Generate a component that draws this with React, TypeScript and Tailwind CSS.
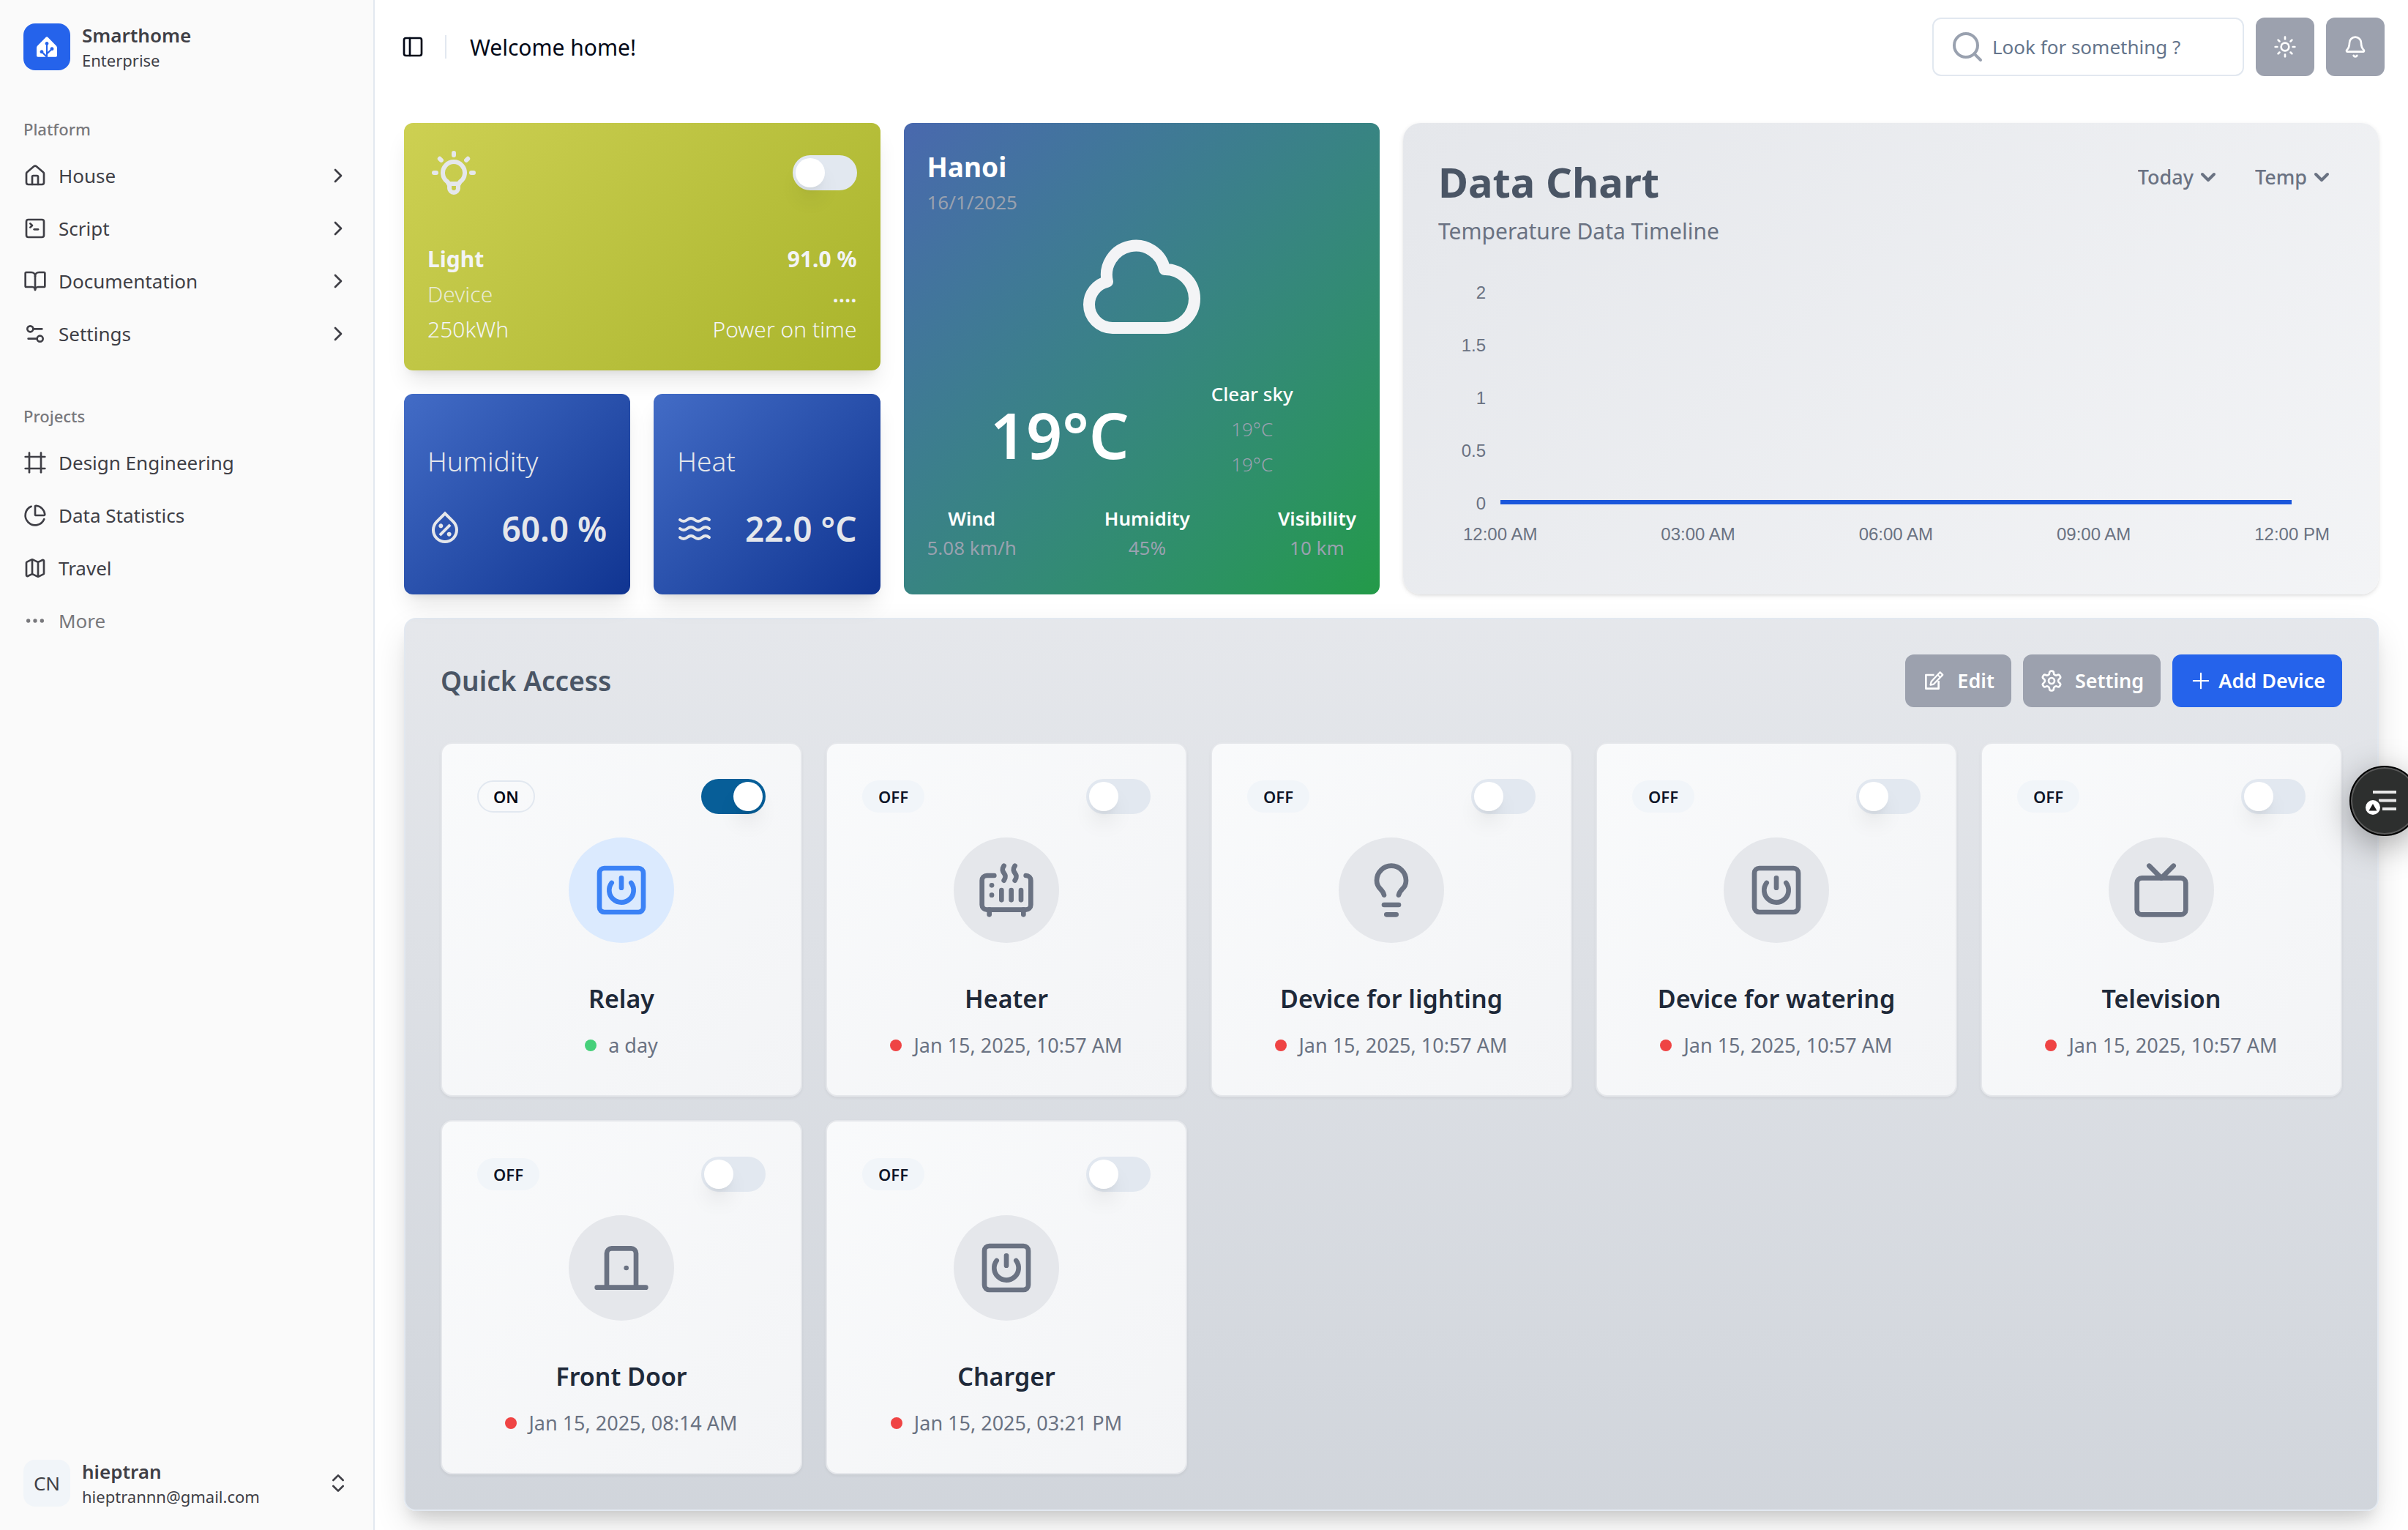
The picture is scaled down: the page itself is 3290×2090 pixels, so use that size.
import React from "react";
import {
  Bell, BookOpen, ChartPie, ChevronDown, ChevronRight, ChevronsUpDown, Ellipsis, Frame, Heater, House,
  Lightbulb, Map, PanelLeft, Search, Settings2, SquarePower, SquareTerminal, Sun, Tv, Waves,
} from "lucide-react";
import { RiWaterPercentLine } from "react-icons/ri";
import { RxPlus } from "react-icons/rx";
import { SiHomeassistant } from "react-icons/si";
import { TbBulb } from "react-icons/tb";

type IconProps = { className?: string };
type IconType = React.ComponentType<IconProps>;

const strokeProps = {
  viewBox: "0 0 24 24",
  fill: "none",
  stroke: "currentColor",
  strokeWidth: 2,
  strokeLinecap: "round" as const,
  strokeLinejoin: "round" as const,
};

function DoorIcon({ className }: IconProps) {
  return (
    <svg {...strokeProps} className={className} aria-hidden="true">
      <path d="M18 20V6a2 2 0 0 0-2-2H8a2 2 0 0 0-2 2v14" />
      <path d="M2 20h20" />
      <path d="M14 12v.01" />
    </svg>
  );
}

function EditIcon({ className }: IconProps) {
  return (
    <svg {...strokeProps} strokeLinecap="butt" className={className} aria-hidden="true">
      <path d="M12.500 6H4v14h13v-8" />
      <path strokeWidth="1.700" d="M18.500 3.200l2.700 2.700-9.200 9.500-3.300.8.800-3.400z" />
      <path strokeWidth="1.500" d="M16 5.800l2.700 2.700" />
    </svg>
  );
}

function CogIcon({ className }: IconProps) {
  return (
    <svg {...strokeProps} className={className} aria-hidden="true">
      <path d="M12.22 2h-.44a2 2 0 0 0-2 2v.18a2 2 0 0 1-1 1.73l-.43.25a2 2 0 0 1-2 0l-.15-.08a2 2 0 0 0-2.73.73l-.22.38a2 2 0 0 0 .73 2.73l.15.1a2 2 0 0 1 1 1.72v.51a2 2 0 0 1-1 1.74l-.15.09a2 2 0 0 0-.73 2.73l.22.38a2 2 0 0 0 2.73.73l.15-.08a2 2 0 0 1 2 0l.43.25a2 2 0 0 1 1 1.73V20a2 2 0 0 0 2 2h.44a2 2 0 0 0 2-2v-.18a2 2 0 0 1 1-1.73l.43-.25a2 2 0 0 1 2 0l.15.08a2 2 0 0 0 2.73-.73l.22-.39a2 2 0 0 0-.73-2.73l-.15-.08a2 2 0 0 1-1-1.74v-.5a2 2 0 0 1 1-1.74l.15-.09a2 2 0 0 0 .73-2.73l-.22-.38a2 2 0 0 0-2.73-.73l-.15.08a2 2 0 0 1-2 0l-.43-.25a2 2 0 0 1-1-1.73V4a2 2 0 0 0-2-2z" />
      <circle cx="12" cy="12" r="3" />
    </svg>
  );
}

function CloudIcon({ className }: IconProps) {
  return (
    <svg {...strokeProps} className={className} aria-hidden="true">
      <path d="M3 15a4 4 0 004 4h9a5 5 0 10-.1-9.999 5.002 5.002 0 10-9.78 2.096A4.001 4.001 0 003 15z" />
    </svg>
  );
}

const platform: { label: string; Icon: IconType }[] = [
  { label: "House", Icon: House },
  { label: "Script", Icon: SquareTerminal },
  { label: "Documentation", Icon: BookOpen },
  { label: "Settings", Icon: Settings2 },
];

const projects: { label: string; Icon: IconType }[] = [
  { label: "Design Engineering", Icon: Frame },
  { label: "Data Statistics", Icon: ChartPie },
  { label: "Travel", Icon: Map },
];

const devices: { name: string; on: boolean; since: string; Icon: IconType }[] = [
  { name: "Relay", on: true, since: "a day", Icon: SquarePower },
  { name: "Heater", on: false, since: "Jan 15, 2025, 10:57 AM", Icon: Heater },
  { name: "Device for lighting", on: false, since: "Jan 15, 2025, 10:57 AM", Icon: Lightbulb },
  { name: "Device for watering", on: false, since: "Jan 15, 2025, 10:57 AM", Icon: SquarePower },
  { name: "Television", on: false, since: "Jan 15, 2025, 10:57 AM", Icon: Tv },
  { name: "Front Door", on: false, since: "Jan 15, 2025, 08:14 AM", Icon: DoorIcon },
  { name: "Charger", on: false, since: "Jan 15, 2025, 03:21 PM", Icon: SquarePower },
];

function Switch({ label, on = false }: { label: string; on?: boolean }) {
  return (
    <input
      type="checkbox"
      role="switch"
      aria-label={label}
      defaultChecked={on}
      className="block h-12 w-[88px] shrink-0 cursor-pointer appearance-none rounded-full bg-[#e2e8f0] p-1 before:block before:size-10 before:rounded-full before:bg-white before:shadow-[0_20px_30px_-6px_rgba(0,0,0,0.1),0_8px_12px_-8px_rgba(0,0,0,0.1)] checked:bg-[#075e98] checked:before:translate-x-10"
    />
  );
}

function Sidebar() {
  return (
    <aside className="flex w-[512px] shrink-0 flex-col border-r-2 border-[#e2e8f0] bg-[#fafafa] text-[26px] text-[#3f3f46]">
      <div className="flex items-center gap-4 px-8 pt-[30px] pb-[30px]">
        <div className="flex size-16 items-center justify-center rounded-2xl bg-[#2563eb] text-white">
          <SiHomeassistant className="size-7" />
        </div>
        <div>
          <p className="leading-9 font-semibold">Smarthome</p>
          <p className="text-[22px] leading-8">Enterprise</p>
        </div>
      </div>
      <nav aria-label="Platform" className="px-4 pt-4">
        <h2 className="px-4 text-[22px] leading-[64px] font-medium text-[#78787c]">Platform</h2>
        <ul className="flex flex-col gap-2">
          {platform.map(({ label, Icon }) => (
            <li key={label}>
              <button type="button" className="flex h-16 w-full items-center gap-4 px-4">
                <Icon className="size-8" />
                {label}
                <ChevronRight className="ml-auto size-8" />
              </button>
            </li>
          ))}
        </ul>
      </nav>
      <nav aria-label="Projects" className="px-4 pt-12">
        <h2 className="px-4 text-[22px] leading-[64px] font-medium text-[#78787c]">Projects</h2>
        <ul className="flex flex-col gap-2">
          {projects.map(({ label, Icon }) => (
            <li key={label}>
              <a href="#" className="flex h-16 items-center gap-4 px-4">
                <Icon className="size-8" />
                {label}
              </a>
            </li>
          ))}
          <li>
            <button type="button" className="flex h-16 w-full items-center gap-4 px-4 text-[#78787c]">
              <Ellipsis className="size-8" />
              More
            </button>
          </li>
        </ul>
      </nav>
      <button type="button" className="mt-auto flex items-center gap-4 px-8 pb-[30px] text-left">
        <span className="flex size-16 items-center justify-center rounded-2xl bg-[#f1f5f9]">CN</span>
        <span className="flex flex-col">
          <span className="leading-9 font-semibold">hieptran</span>
          <span className="text-[22px] leading-8">hieptrannn@gmail.com</span>
        </span>
        <ChevronsUpDown className="ml-auto size-8" />
      </button>
    </aside>
  );
}

function Header() {
  return (
    <header className="flex h-32 items-center px-8">
      <button type="button" aria-label="Toggle sidebar" className="-ml-2 flex size-14 items-center justify-center">
        <PanelLeft className="size-8" />
      </button>
      <div className="ml-4 h-8 w-0.5 bg-[#e2e8f0]" />
      <h1 className="ml-8 text-[30px]">Welcome home!</h1>
      <div className="ml-auto flex items-center gap-4">
        <label className="flex h-20 w-[426px] items-center gap-2.5 rounded-xl border-2 border-[#e2e8f0] px-[22px]">
          <Search className="size-12 shrink-0 text-gray-400" />
          <input
            type="search"
            aria-label="Search"
            placeholder="Look for something ?"
            className="min-w-0 flex-1 bg-transparent text-[26px] outline-none placeholder:text-[#64748b] placeholder:opacity-100"
          />
        </label>
        <button type="button" aria-label="Toggle theme" className="flex size-20 items-center justify-center rounded-xl bg-[#9ca1ae] text-white">
          <Sun className="size-8" />
        </button>
        <button type="button" aria-label="Notifications" className="flex size-20 items-center justify-center rounded-xl bg-[#9ca1ae] text-white">
          <Bell className="size-8" />
        </button>
      </div>
    </header>
  );
}

function LightCard() {
  return (
    <section className="rounded-xl bg-linear-135 from-[#cdd052] to-[#a9b42a] p-8 text-[30px] leading-[48px] text-gray-100 shadow-[0_20px_30px_-6px_rgba(0,0,0,0.1),0_8px_12px_-8px_rgba(0,0,0,0.1)]">
      <div className="flex items-center justify-between">
        <TbBulb className="size-[72px] text-gray-200" />
        <Switch label="Light" />
      </div>
      <div className="mt-[58px] flex justify-between font-bold">
        <span>Light</span>
        <span>91.0 %</span>
      </div>
      <div className="flex justify-between">
        <span className="font-light opacity-80">Device</span>
        <span className="font-semibold">....</span>
      </div>
      <div className="flex justify-between font-light">
        <span>250kWh</span>
        <span>Power on time</span>
      </div>
    </section>
  );
}

function MetricCard({ title, value, Icon }: { title: string; value: string; Icon: IconType }) {
  return (
    <section className="h-[274px] rounded-xl bg-linear-135 from-[#436cc6] to-[#103491] px-8 pt-16 text-gray-200 shadow-[0_20px_30px_-6px_rgba(0,0,0,0.1),0_8px_12px_-8px_rgba(0,0,0,0.1)]">
      <h2 className="text-[37px] leading-[56px] font-light">{title}</h2>
      <div className="mt-8 flex items-center justify-between">
        <Icon className="size-12" />
        <span className="text-[46px] leading-[64px] font-semibold">{value}</span>
      </div>
    </section>
  );
}

function WeatherCard() {
  const details = [
    { label: "Wind", value: "5.08 km/h" },
    { label: "Humidity", value: "45%" },
    { label: "Visibility", value: "10 km" },
  ];
  return (
    <section className="rounded-xl bg-linear-135 from-[#4968ae] to-[#239a48] p-8 text-[26px] leading-10 text-white">
      <h2 className="text-[37px] leading-[56px] font-bold">Hanoi</h2>
      <p className="text-gray-400">16/1/2025</p>
      <CloudIcon className="mx-auto size-48 text-gray-100" />
      <div className="mt-[26px] flex items-end justify-center gap-28">
        <p className="text-[86px] leading-[128px] font-semibold">19°C</p>
        <div className="text-center leading-[48px]">
          <p className="font-medium">Clear sky</p>
          <p className="font-light text-gray-400">19°C</p>
          <p className="font-light text-gray-400">19°C</p>
        </div>
      </div>
      <dl className="mt-[30px] flex justify-between text-center">
        {details.map((d) => (
          <div key={d.label}>
            <dt className="font-semibold">{d.label}</dt>
            <dd className="text-gray-400">{d.value}</dd>
          </div>
        ))}
      </dl>
    </section>
  );
}

function ChartSelect({ label, value }: { label: string; value: string }) {
  return (
    <div className="flex items-center gap-1">
      <select aria-label={label} className="appearance-none bg-transparent [field-sizing:content]">
        <option>{value}</option>
      </select>
      <ChevronDown className="pointer-events-none size-8" strokeWidth={3} />
    </div>
  );
}

function ChartCard() {
  return (
    <section className="col-span-2 rounded-3xl bg-linear-135 from-gray-200 to-gray-100 px-12 pt-11 text-gray-500 shadow-[0_2px_6px_rgba(0,0,0,0.1),0_2px_4px_-2px_rgba(0,0,0,0.1)]">
      <div className="flex items-start justify-between">
        <div>
          <h2 className="text-[56px] leading-[72px] font-bold text-gray-600">Data Chart</h2>
          <p className="mt-2 text-[30px] leading-[48px]">Temperature Data Timeline</p>
        </div>
        <div className="mt-1.5 mr-3.5 flex gap-12 text-[27px] leading-[48px] font-medium">
          <ChartSelect label="Period" value="Today" />
          <ChartSelect label="Measure" value="Temp" />
        </div>
      </div>
      <div className="mt-11 flex font-['Liberation_Sans',Arial,sans-serif] text-2xl leading-8">
        <div className="flex h-80 w-[65px] flex-col justify-between text-right">
          {["2", "1.5", "1", "0.5", "0"].map((t) => (
            <span key={t}>{t}</span>
          ))}
        </div>
        <div className="mr-[71px] ml-5 flex flex-1 items-end pb-[15px]">
          <svg className="h-1.5 w-full" role="img" aria-label="Temperature stays at 0 all day">
            <line x1="0" y1="3" x2="100%" y2="3" stroke="#1a56db" strokeWidth="6" />
          </svg>
        </div>
      </div>
      <div className="mt-2.5 mr-[19px] ml-[34px] flex justify-between font-['Liberation_Sans',Arial,sans-serif] text-2xl leading-8">
        {["12:00 AM", "03:00 AM", "06:00 AM", "09:00 AM", "12:00 PM"].map((t) => (
          <span key={t}>{t}</span>
        ))}
      </div>
    </section>
  );
}

function DeviceCard({ name, on, since, Icon }: (typeof devices)[number]) {
  return (
    <article className="flex flex-col items-center rounded-2xl border-2 border-gray-200 bg-linear-135 from-gray-50 to-gray-100 p-12 shadow-[0_2px_4px_rgba(0,0,0,0.05)]">
      <div className="flex w-full items-center justify-between">
        <span
          className={
            on
              ? "rounded-full border-2 border-[#e2e8f0] px-5 text-[22px] leading-10 font-semibold text-[#020817]"
              : "rounded-full border-2 border-transparent bg-[#f1f5f9] px-5 text-[22px] leading-10 font-semibold text-[#0f172a]"
          }
        >
          {on ? "ON" : "OFF"}
        </span>
        <Switch label={name} on={on} />
      </div>
      <div
        className={
          on
            ? "mt-8 flex size-36 items-center justify-center rounded-full bg-blue-100 text-[#3b82f6]"
            : "mt-8 flex size-36 items-center justify-center rounded-full bg-gray-200 text-gray-500"
        }
      >
        <Icon className="size-20" />
      </div>
      <h3 className="mt-[52px] text-[34px] leading-[48px] font-semibold text-gray-800">{name}</h3>
      <p className="mt-5 flex items-center gap-4 text-[27px] leading-10 text-gray-500">
        <span className={on ? "size-4 rounded-full bg-[#46d07a]" : "size-4 rounded-full bg-[#ef4444]"} />
        {since}
      </p>
    </article>
  );
}

function QuickAccess() {
  return (
    <section className="mt-8 rounded-2xl border-2 border-[#e2e8f0] bg-linear-to-b from-gray-200 to-gray-300 p-12 shadow-[0_20px_50px_-6px_rgba(0,0,0,0.14),0_16px_20px_-8px_rgba(0,0,0,0.12)]">
      <div className="flex items-center justify-between">
        <h2 className="text-[37px] leading-[56px] font-semibold text-gray-600">Quick Access</h2>
        <div className="flex gap-4 text-[27px] font-semibold text-white">
          <button type="button" className="flex h-[72px] items-center gap-4 rounded-xl bg-[#9ca1ae] px-[23px]">
            <EditIcon className="size-8" />
            Edit
          </button>
          <button type="button" className="flex h-[72px] items-center gap-4 rounded-xl bg-[#9ca1ae] px-[23px]">
            <CogIcon className="size-8" />
            Setting
          </button>
          <button type="button" className="flex h-[72px] items-center gap-2 rounded-xl bg-[#2563eb] px-[23px]">
            <RxPlus className="size-8" />
            Add Device
          </button>
        </div>
      </div>
      <div className="mt-12 grid grid-cols-5 gap-8">
        {devices.map((d) => (
          <DeviceCard key={d.name} {...d} />
        ))}
      </div>
    </section>
  );
}

function FloatingButton() {
  return (
    <button
      type="button"
      aria-label="Open reading list"
      className="fixed top-[1046px] -right-4 size-24 rounded-full border-2 border-black bg-[#2d2f2e] shadow-[0_12px_48px_rgba(0,0,0,0.35)] ring-2 ring-[#5a5a5a] ring-inset"
    >
      <svg viewBox="0 0 92 92" className="size-full" aria-hidden="true">
        <path d="M30 34h32M38 45.500h24M43 57h19" stroke="#e8e8e8" strokeWidth="4" fill="none" />
        <circle cx="30" cy="55" r="12" fill="#2d2f2e" />
        <circle cx="30" cy="55" r="10" fill="#fff" />
        <path d="M30 50l5.500 9.500h-11z" fill="#1c1c1c" />
      </svg>
    </button>
  );
}

export default function App() {
  return (
    <div className="relative flex min-h-screen overflow-hidden bg-white font-['Noto_Sans','Open_Sans',sans-serif] text-[#020817]">
      <Sidebar />
      <div className="min-w-0 flex-1">
        <Header />
        <main className="px-10 pt-10 pb-6">
          <div className="grid grid-cols-4 gap-8">
            <div className="flex flex-col gap-8">
              <LightCard />
              <div className="grid grid-cols-2 gap-8">
                <MetricCard title="Humidity" value="60.0 %" Icon={RiWaterPercentLine} />
                <MetricCard title="Heat" value="22.0 °C" Icon={Waves} />
              </div>
            </div>
            <WeatherCard />
            <ChartCard />
          </div>
          <QuickAccess />
        </main>
      </div>
      <FloatingButton />
    </div>
  );
}
